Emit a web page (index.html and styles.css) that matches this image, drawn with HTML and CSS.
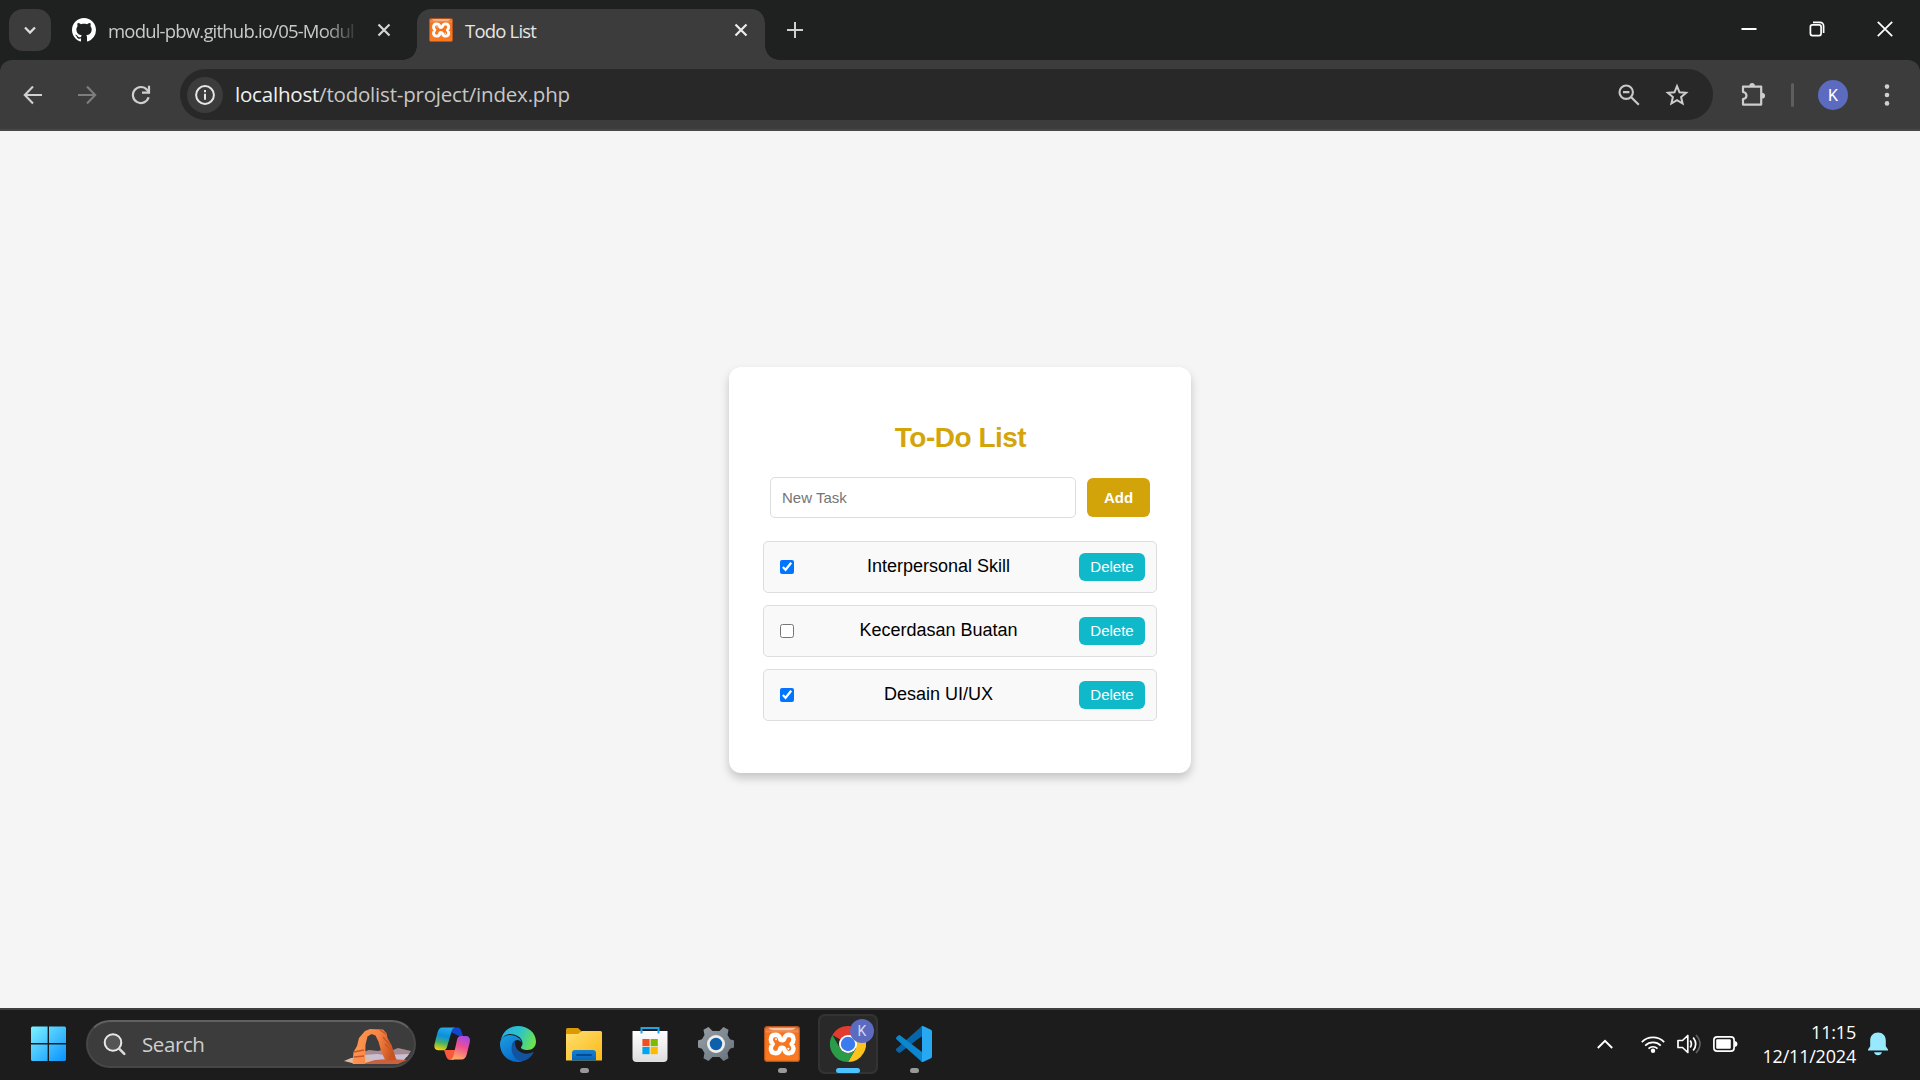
FILE: index.html
```html
<!DOCTYPE html>
<html lang="en">
<head>
<meta charset="utf-8">
<title>Todo List</title>
<link rel="stylesheet" href="styles.css">
</head>
<body>
<svg width="0" height="0" class="defs" aria-hidden="true">
  <defs>
    <linearGradient id="xamppBg" x1="0" y1="0" x2="0" y2="1"><stop offset="0" stop-color="#d9662a"/><stop offset=".14" stop-color="#f08a50"/><stop offset=".2" stop-color="#f4731c"/><stop offset="1" stop-color="#fb7a22"/></linearGradient>
    <symbol id="xampp" viewBox="0 0 36 36">
      <rect x=".6" y=".6" width="34.8" height="34.8" rx="2.5" fill="url(#xamppBg)" stroke="#b9541c" stroke-width="1.2"/>
      <path d="M4 1.800h28q-2 2.400-6 2.400H10Q6 4.200 4 1.800z" fill="#f7c3a0"/>
      <path d="M18 14.200Q16 14.200 16 12Q15 8.800 11.500 8.800Q6.800 9 6.800 13.500Q6.800 16 8.800 18Q6.800 20 6.800 22.500Q6.800 27 11.500 27.200Q15 27.200 16 24Q16 21.800 18 21.800Q20 21.800 20.500 24Q21.500 27.200 25 27.200Q29.500 27 29.500 22.500Q29.500 20 27.500 18Q29.500 16 29.500 13.500Q29.500 9 25 8.800Q21.500 8.800 20.500 12Q20 14.200 18 14.200z" fill="none" stroke="#fff" stroke-width="4.400" stroke-linejoin="round"/>
      <path d="M12 13.200h.1M24.300 22.800h.1" stroke="#fff" stroke-width="2" stroke-linecap="round"/>
    </symbol>
  </defs>
</svg>

<header class="tabstrip">
  <button class="tab-search"><svg width="14" height="14" viewBox="0 0 14 14"><path d="M2 4.500l5 5 5-5" fill="none" stroke="#dcdcdc" stroke-width="2.300"/></svg></button>
  <div class="tab">
    <svg class="favicon" width="24" height="24" viewBox="0 0 16 16"><path fill="#fff" d="M8 0C3.580 0 0 3.580 0 8c0 3.540 2.290 6.530 5.470 7.590.4.070.55-.17.55-.38 0-.19-.01-.82-.01-1.490-2.010.37-2.530-.49-2.690-.94-.09-.23-.48-.94-.82-1.130-.28-.15-.68-.52-.01-.53.63-.01 1.080.58 1.230.82.72 1.210 1.870.87 2.330.66.070-.52.28-.87.51-1.070-1.780-.2-3.640-.89-3.640-3.950 0-.87.31-1.590.82-2.150-.08-.2-.36-1.020.08-2.120 0 0 .67-.21 2.200.82.64-.18 1.320-.27 2-.27s1.360.09 2 .27c1.530-1.040 2.200-.82 2.200-.82.44 1.100.16 1.920.08 2.120.51.56.82 1.270.82 2.150 0 3.070-1.870 3.750-3.650 3.950.29.25.54.73.54 1.480 0 1.070-.01 1.930-.01 2.200 0 .21.15.46.55.38A8.010 8.010 0 0 0 16 8c0-4.420-3.580-8-8-8z"/></svg>
    <span class="tab-title fade">modul-pbw.github.io/05-Modul</span>
    <svg class="tab-close" width="14" height="14" viewBox="0 0 14 14"><path d="M1.500 1.500l11 11M12.500 1.500l-11 11" stroke="#d5d5d5" stroke-width="2.200"/></svg>
  </div>
  <div class="tab active">
    <svg class="favicon" width="24" height="24"><use href="#xampp"/></svg>
    <span class="tab-title">Todo List</span>
    <svg class="tab-close" width="14" height="14" viewBox="0 0 14 14"><path d="M1.500 1.500l11 11M12.500 1.500l-11 11" stroke="#ececec" stroke-width="2.200"/></svg>
  </div>
  <svg class="new-tab" width="16" height="16" viewBox="0 0 16 16"><path d="M8 0v16M0 8h16" stroke="#cfcfcf" stroke-width="2"/></svg>
  <div class="window-controls">
    <svg width="16" height="16" viewBox="0 0 16 16"><path d="M.5 8h15" stroke="#fff" stroke-width="2"/></svg>
    <svg width="16" height="16" viewBox="0 0 16 16"><rect x="1.400" y="3.900" width="10.700" height="10.700" rx="2" fill="none" stroke="#fff" stroke-width="1.700"/><path d="M4 1.400h7a3.600 3.600 0 0 1 3.600 3.600v7" fill="none" stroke="#fff" stroke-width="1.700"/></svg>
    <svg width="16" height="16" viewBox="0 0 16 16"><path d="M.8.8l14.400 14.400M15.200.8L.8 15.200" stroke="#fff" stroke-width="1.700"/></svg>
  </div>
</header>

<nav class="toolbar">
  <div class="nav-buttons">
    <svg width="20" height="20" viewBox="0 0 20 20"><path d="M19 10H2.500M10 1.600L1.800 10l8.200 8.400" fill="none" stroke="#d0d0d0" stroke-width="2.100"/></svg>
    <svg width="20" height="20" viewBox="0 0 20 20"><path d="M1 10h16.500M10 1.600l8.200 8.400-8.200 8.400" fill="none" stroke="#7d7d7d" stroke-width="2.100"/></svg>
    <svg width="20" height="20" viewBox="0 0 20 20"><path d="M17.600 12.300A8 8 0 1 1 16 4.800l1.800 2" fill="none" stroke="#cfcfcf" stroke-width="2.200"/><path d="M18 .7v7h-7" fill="none" stroke="#cfcfcf" stroke-width="2.200"/></svg>
  </div>
  <div class="omnibox">
    <span class="site-info"><svg width="20" height="20" viewBox="0 0 20 20"><circle cx="10" cy="10" r="8.900" fill="none" stroke="#e6e6e6" stroke-width="2"/><path d="M10 8.700v6M10 5v2.200" stroke="#e6e6e6" stroke-width="2"/></svg></span>
    <span class="url"><span class="host">localhost</span>/todolist-project/index.php</span>
    <svg class="zoom-icon" width="22" height="22" viewBox="0 0 22 22"><circle cx="8.200" cy="8.200" r="6.700" fill="none" stroke="#c8c8c8" stroke-width="2.100"/><path d="M13 13l7.800 7.800M5 8.200h6.400" stroke="#c8c8c8" stroke-width="2.200"/></svg>
    <svg class="star-icon" width="24" height="24" viewBox="0 0 24 24"><path d="M12 3.200l2.500 6.100 6.600.5-5 4.300 1.500 6.400-5.600-3.400-5.600 3.400 1.500-6.400-5-4.300 6.600-.5z" fill="none" stroke="#cdcdcd" stroke-width="2"/></svg>
  </div>
  <svg class="puzzle" width="26" height="26" viewBox="0 0 26 26"><path d="M3 4.600h18.200v18H3v-5.400c4.600-.8 4.600-6.400 0-7.200z" fill="none" stroke="#cdcdcd" stroke-width="2.200" stroke-linejoin="round"/><path d="M9.200 4.500a2.900 3.600 0 0 1 5.800 0zM21.500 10.800a3.600 2.900 0 0 1 0 5.800z" fill="#cdcdcd"/></svg>
  <span class="divider"></span>
  <span class="avatar">K</span>
  <svg class="kebab" width="6" height="22" viewBox="0 0 6 22"><g fill="#d0d0d0"><circle cx="3" cy="2.600" r="2.300"/><circle cx="3" cy="11" r="2.300"/><circle cx="3" cy="19.400" r="2.300"/></g></svg>
</nav>

<main class="page">
  <section class="card">
    <h1>To-Do List</h1>
    <form class="new-task">
      <input type="text" placeholder="New Task">
      <button type="button" class="add">Add</button>
    </form>
    <ul class="tasks">
      <li><input type="checkbox" checked><span>Interpersonal Skill</span><button class="delete">Delete</button></li>
      <li><input type="checkbox"><span>Kecerdasan Buatan</span><button class="delete">Delete</button></li>
      <li><input type="checkbox" checked><span>Desain UI/UX</span><button class="delete">Delete</button></li>
    </ul>
  </section>
</main>

<footer class="taskbar">
  <svg class="start" width="36" height="36" viewBox="0 0 36 36"><defs><linearGradient id="win" x1="0" y1="0" x2="1" y2="1"><stop offset="0" stop-color="#7df3ff"/><stop offset="1" stop-color="#0891ff"/></linearGradient></defs><path fill="url(#win)" d="M1.500.5H16.600v16.600H0V2Q0 .5 1.500.5zM18 .5h15.500q1.500 0 1.500 1.500v15.100H18zM0 18.400h16.600V35H1.500Q0 35 0 33.500zM18 18.400h17v15.100q0 1.500-1.500 1.500H18z"/></svg>
  <div class="search">
    <svg class="search-icon" width="24" height="24" viewBox="0 0 24 24"><circle cx="10" cy="10.500" r="8.300" fill="#555" stroke="#e8e8e8" stroke-width="2"/><path d="M16.300 16.800l5 5" stroke="#dadada" stroke-width="2.600" stroke-linecap="round"/></svg>
    <span>Search</span>
    <svg class="arch" width="68" height="40" viewBox="0 0 68 40"><defs><linearGradient id="rock" x1="0" y1="0" x2="1" y2=".2"><stop offset="0" stop-color="#ff9a55"/><stop offset=".6" stop-color="#fa8444"/><stop offset="1" stop-color="#c9531f"/></linearGradient></defs><path d="M20 28l6-2 9 1 7-2 8 1 5-2 13 3-4 6H20z" fill="#a78b92"/><path d="M20 31l14-1 8 1 24-1-5 6-10 3H20z" fill="#cbbdd2"/><path d="M1 37l7-3 8-1 10 1 4 5H9z" fill="#dbbba6"/><path d="M22 39l10-3 14-1 18 1-9 4H22z" fill="#c8613d"/><path d="M9.500 40l1-12 3.500-6 2-8 6-7 5-2 13 .5 3.500 3.500 1 5 4 7 5 15-11 .5-4-8-3-11-3-6-4-1.500-4 2.500-2 8-.5 19.500z" fill="url(#rock)"/><path d="M11 28l10-2M37 6l6 4M40 13l7 8M42 20l7 7M11 33l10-1" fill="none" stroke="#c3582a" stroke-width="1.300"/></svg>
  </div>
  <div class="apps">
    <div class="app"><svg width="36" height="36" viewBox="0 0 36 36"><defs><linearGradient id="cpA" x1=".4" y1="0" x2=".2" y2="1"><stop offset="0" stop-color="#25a9e8"/><stop offset=".35" stop-color="#0b8fe0"/><stop offset=".65" stop-color="#45b06a"/><stop offset="1" stop-color="#ffd500"/></linearGradient><linearGradient id="cpB" x1=".7" y1="0" x2=".4" y2="1"><stop offset="0" stop-color="#a349e8"/><stop offset=".45" stop-color="#ef4f93"/><stop offset="1" stop-color="#ffaa61"/></linearGradient></defs><path d="M19 1.500h4.500c2 0 3 1 3.500 2.800l2 5.700h-4l-8-4z" fill="#1545cf"/><path d="M10 24l2 6c1 2.500 2 4 4.500 4H20l2-10z" fill="#f8593c"/><path d="M8 1.500h13c-2 .5-3 2-3.800 5l-4.200 14.500c-.6 2-1.500 3.200-4 3.200H4C.5 24.200-.2 21 .7 17.500L3.500 6.500C4.500 3 6 1.500 8 1.500z" fill="url(#cpA)"/><path d="M27 10h5c3.500 0 4.500 3 3.700 6.500l-3 12c-1 3.500-2.500 5-5 5H16c2.300-.5 3-2 3.800-5L23 14c.7-2.500 1.500-4 4-4z" fill="url(#cpB)"/></svg></div>
    <div class="app"><svg width="36" height="36" viewBox="0 0 36 36"><defs><linearGradient id="edA" x1="0" y1=".2" x2="1" y2=".5"><stop offset="0" stop-color="#26afe8"/><stop offset=".5" stop-color="#2bc3c9"/><stop offset="1" stop-color="#6be34f"/></linearGradient><linearGradient id="edB" x1="0" y1="0" x2=".6" y2="1"><stop offset="0" stop-color="#1ba0e2"/><stop offset="1" stop-color="#0868ca"/></linearGradient></defs><path d="M1 14C3 5 10 0 18 0c10 0 18 7 18 15.500 0 5-3.500 8.500-8.500 8.500-4 0-6.500-1.200-6.500-2.500 0-1 1.500-1.700 1.500-4.300C22.500 11 15 8 10 8 6 8 3 10 1 14z" fill="url(#edA)"/><path d="M0 18c0-5 4-9 10-9 6.500 0 11 4 11.700 7.500C20.800 15 19 14 17.500 14c-4 0-5.500 4-5.500 7 0 8 6 13 12 13.500-2 1-4 1.500-6 1.500C8 36 0 28 0 18z" fill="url(#edB)"/><path d="M15 15c-2 1.500-3.500 4-3.500 7C11.500 29 17 36 23 35c4.500-1 8-4 10.500-8 .4-.8-.3-1-1-.7C25 30 14 26 15 15z" fill="#12529f"/></svg></div>
    <div class="app open"><svg width="36" height="36" viewBox="0 0 36 36"><defs><linearGradient id="fold" x1="0" y1="0" x2="1" y2="1"><stop offset="0" stop-color="#ffdf70"/><stop offset="1" stop-color="#fbb917"/></linearGradient><linearGradient id="foldB" x1="0" y1="0" x2="0" y2="1"><stop offset="0" stop-color="#1681d6"/><stop offset="1" stop-color="#0865b8"/></linearGradient></defs><path d="M1.500 2H12l3.500 3.200V12H0V3.500Q0 2 1.500 2z" fill="#d99b00"/><path d="M0 8h12l4-3h18.500Q36 5 36 6.500V34.500H0z" fill="url(#fold)"/><path d="M6 34.500V27q0-3 3-3h18q3 0 3 3v7.500z" fill="url(#foldB)"/><path d="M11 29h14" stroke="#054a8d" stroke-width="1.800" stroke-linecap="round"/></svg></div>
    <div class="app"><svg width="36" height="36" viewBox="0 0 36 36"><defs><linearGradient id="bag" x1="0" y1="0" x2="0" y2="1"><stop offset="0" stop-color="#fff"/><stop offset="1" stop-color="#dedede"/></linearGradient></defs><path d="M.5 5h35v27q0 4-4 4h-27q-4 0-4-4z" fill="url(#bag)"/><path d="M9.500 7.500V1.900h17v5.600" fill="none" stroke="#20a4e5" stroke-width="2"/><path fill="#f25022" d="M10.400 13h7.200v7.200h-7.200z"/><path fill="#7fba00" d="M18.600 13h7.200v7.200h-7.200z"/><path fill="#00a4ef" d="M10.400 21h7.200v7.200h-7.200z"/><path fill="#ffb900" d="M18.600 21h7.200v7.200h-7.200z"/></svg></div>
    <div class="app"><svg width="36" height="36" viewBox="0 0 36 36"><defs><linearGradient id="gear" x1="0" y1="0" x2="1" y2="1"><stop offset="0" stop-color="#98a0a6"/><stop offset="1" stop-color="#66727c"/></linearGradient></defs><path d="M10.500 1l4 4h7l4-4 5 2.800-1 5.200 2.500 4.300L36 14.500v7l-4 1.200-2.500 4.300 1 5.200-5 2.800-4-4h-7l-4 4-5-2.800 1-5.200L4 22.700 0 21.500v-7l4-1.200L6.500 9l-1-5.200z" fill="url(#gear)"/><circle cx="18" cy="18" r="7.600" fill="#0e60ad" stroke="#eee" stroke-width="2.800"/></svg></div>
    <div class="app open"><svg width="36" height="36"><use href="#xampp"/></svg></div>
    <div class="app current"><svg width="36" height="36" viewBox="0 0 36 36"><path d="M18 18L2.400 9A18 18 0 0 1 33.600 9H18z" fill="#e33b2e"/><path d="M18 9h15.600A18 18 0 0 1 18 36l7.800-13.500z" fill="#fcc31e"/><path d="M2.400 9l7.800 13.500A9 9 0 0 0 25.800 22.500L18 36A18 18 0 0 1 2.400 9z" fill="#2a9c48"/><circle cx="18" cy="18" r="9" fill="#fff"/><circle cx="18" cy="18" r="7.200" fill="#3a7cf0"/></svg><span class="badge">K</span></div>
    <div class="app open"><svg width="36" height="36" viewBox="0 0 36 36"><path d="M26 0v10L4.300 26.600q-1 .8-2 0L.6 25q-1.200-1.300 0-2.500z" fill="#0765a9"/><path d="M26 36V26L4.300 9.400q-1-.8-2 0L.6 11q-1.200 1.300 0 2.500z" fill="#0b86cf"/><path d="M26 .2q.6-.4 1.500 0L35 3.800q1 .5 1 1.700v25q0 1.200-1 1.700l-7.500 3.600q-1.500.5-2.500-.6 1 .5 1-1V1.800q0-1.200-1-.6z" fill="#27a9f2"/></svg></div>
  </div>
  <div class="tray">
    <svg class="chevron" width="16" height="10" viewBox="0 0 16 10"><path d="M.8 9L8 1.800 15.200 9" fill="none" stroke="#fff" stroke-width="1.900"/></svg>
    <svg class="wifi" width="24" height="18" viewBox="0 0 24 18"><g fill="none" stroke="#fff" stroke-width="1.700"><path d="M.8 7.200a15.600 15.600 0 0 1 22.400 0M4.200 10.600a11 11 0 0 1 15.600 0M7.500 13.600a6.400 6.400 0 0 1 9 0"/></g><circle cx="12" cy="15.700" r="2.200" fill="#fff"/></svg>
    <svg class="volume" width="25" height="20" viewBox="0 0 25 20"><path d="M1 6.500h4.500L10.800 1.500v17L5.500 13.500H1z" fill="none" stroke="#fff" stroke-width="1.700" stroke-linejoin="round"/><path d="M13.200 6.500q2.400 3.500 0 7M16.200 3.500q5 6.500 0 13" fill="none" stroke="#fff" stroke-width="1.700"/><path d="M19 1q8 9 0 18" fill="none" stroke="#666" stroke-width="1.500"/></svg>
    <svg class="battery" width="25" height="16" viewBox="0 0 25 16"><rect x=".9" y=".9" width="20.200" height="14.200" rx="3.200" fill="none" stroke="#fff" stroke-width="1.700"/><rect x="3.200" y="3.200" width="14.600" height="9.600" rx="1" fill="#fff"/><path d="M22 5q2.500.5 2.500 3T22 11z" fill="#fff"/></svg>
    <div class="clock"><span>11:15</span><span class="date">12/11/2024</span></div>
    <svg class="bell" width="20" height="24" viewBox="0 0 20 24"><path d="M10 .5c4.500 0 7.800 3.300 7.800 7.800v5.900L20 17.500v1H0v-1l2.200-3.300V8.300C2.200 3.800 5.500.5 10 .5zM6 20.300h8q-1 2.900-4 2.900t-4-2.900z" fill="#98e9fe"/></svg>
  </div>
</footer>
</body>
</html>
```
FILE: styles.css
```css
* { box-sizing: border-box; }
body {
  margin: 0;
  width: 1920px;
  height: 1080px;
  overflow: hidden;
  display: flex;
  flex-direction: column;
  background: #1f2120;
  font-family: "Open Sans", "Noto Sans", sans-serif;
}
svg { display: block; flex: none; }
button { border: 0; padding: 0; }
.defs { position: absolute; }

/* Tab strip */
.tabstrip {
  height: 60px;
  flex: none;
  display: flex;
  padding: 9px 27px 0 9px;
  color: #c9c9c9;
}
.tab-search {
  width: 42px;
  height: 42px;
  border-radius: 14px;
  background: #3c3c3c;
  display: grid;
  place-items: center;
}
.tab {
  width: 366px;
  height: 51px;
  display: flex;
  padding: 9px 26px 0 21px;
  font-size: 18.500px;
}
.tab-title {
  flex: 1;
  margin-left: 12px;
  height: 28px;
  line-height: 26px;
  white-space: nowrap;
  letter-spacing: -0.800px;
}
.fade {
  flex: none;
  width: 254px;
  -webkit-mask-image: linear-gradient(to right, #000 215px, transparent 252px);
  mask-image: linear-gradient(to right, #000 215px, transparent 252px);
}
.tab-close { margin: 5px 0 0 auto; }
.active {
  width: 348px;
  padding: 9px 17px 0 12px;
  background: #3c3c3c;
  border-radius: 14px 14px 0 0;
  color: #e6e6e6;
  position: relative;
}
.active::before, .active::after {
  content: "";
  position: absolute;
  bottom: 0;
  width: 14px;
  height: 14px;
}
.active::before { left: -14px; background: radial-gradient(circle at 0 0, transparent 13.500px, #3c3c3c 14px); }
.active::after { right: -14px; background: radial-gradient(circle at 100% 0, transparent 13.500px, #3c3c3c 14px); }
.new-tab { margin: 13px 0 0 22px; }
.window-controls {
  margin: 12px 0 0 auto;
  display: flex;
  gap: 52px;
}

/* Toolbar */
.toolbar {
  height: 71px;
  flex: none;
  display: flex;
  align-items: center;
  padding: 0 30px 0 23px;
  background: #3c3c3c;
  border-bottom: 2px solid #474747;
  border-radius: 12px 12px 0 0;
}
.nav-buttons { display: flex; gap: 34px; width: 157px; }
.omnibox {
  width: 1533px;
  height: 51px;
  border-radius: 26px;
  background: #282828;
  display: flex;
  align-items: center;
  padding: 0 24px 0 7px;
}
.site-info {
  width: 36px;
  height: 36px;
  border-radius: 50%;
  background: #3c3c3c;
  display: grid;
  place-items: center;
}
.url {
  margin: -2px 0 0 12px;
  font-size: 20.500px;
  letter-spacing: -0.200px;
  color: #c7c7c7;
}
.host { color: #f0f0f0; }
.zoom-icon { margin-left: auto; }
.star-icon { margin-left: 25px; }
.puzzle { margin-left: 27px; }
.divider { width: 3px; height: 24px; border-radius: 2px; background: #5e5e5e; margin-left: 25px; }
.avatar {
  width: 30px;
  height: 30px;
  margin-left: 24px;
  border-radius: 50%;
  background: #5c6bc0;
  color: #fff;
  font: 16px/31px Roboto, sans-serif;
  text-align: center;
}
.kebab { margin-left: auto; }

/* Page */
.page {
  flex: 1;
  background: #f5f5f5;
  font-family: "Liberation Sans", Arial, sans-serif;
  display: flex;
  justify-content: center;
  align-items: flex-start;
  padding-top: 236px;
}
.card {
  width: 462px;
  height: 406px;
  padding: 55px 34px 0;
  border-radius: 12px;
  background: #fff;
  box-shadow: 0 5px 10px rgba(0, 0, 0, 0.200);
}
h1 {
  margin: 0;
  font-size: 28px;
  line-height: 32px;
  letter-spacing: -0.500px;
  text-indent: 1px;
  text-align: center;
  color: #d4a50a;
}
.new-task { display: flex; align-items: center; justify-content: center; gap: 11px; margin-top: 23px; }
.new-task input {
  width: 306px;
  height: 41px;
  padding: 0 11px;
  border: 1px solid #ddd;
  border-radius: 5px;
  font: 15px "Liberation Sans", Arial, sans-serif;
}
.new-task input::placeholder { color: #757575; }
.add {
  width: 63px;
  height: 39px;
  border-radius: 6px;
  background: #d2a40a;
  color: #fff;
  font: bold 15px "Liberation Sans", Arial, sans-serif;
}
.tasks {
  list-style: none;
  margin: 23px 0 0;
  padding: 0;
  display: grid;
  gap: 12px;
}
.tasks li {
  height: 52px;
  display: flex;
  align-items: center;
  padding: 0 11px 0 16px;
  border: 1px solid #ddd;
  border-radius: 5px;
  background: #f9f9f9;
  font-size: 18px;
}
.tasks input { width: 14px; height: 14px; margin: 0; }
.tasks span { flex: 1; text-align: center; margin: -2px 2px 0 6px; }
.delete {
  width: 66px;
  height: 28px;
  padding-bottom: 1px;
  border-radius: 6px;
  background: #0fb9ca;
  color: #fff;
  font: 15px "Liberation Sans", Arial, sans-serif;
}

/* Taskbar */
.taskbar {
  height: 72px;
  flex: none;
  display: flex;
  align-items: center;
  padding: 0 32px 2px 31px;
  background: #1c1c1c;
  border-top: 2px solid #404040;
  color: #fff;
}
.start { margin-top: -1px; }
.search {
  width: 330px;
  height: 48px;
  margin: -1px 0 0 19px;
  padding: 0 3px 0 15px;
  display: flex;
  align-items: center;
  border: 2px solid #474747;
  border-top-color: #606060;
  border-radius: 24px;
  background: #3c3c3c;
  color: #cfcfcf;
  font-size: 20.500px;
  letter-spacing: -0.400px;
}
.search span { margin-left: 15px; }
.arch { margin-left: auto; }
.apps { display: flex; margin-left: 3px; }
.app {
  width: 60px;
  height: 60px;
  margin: -1px 3px 0;
  display: grid;
  place-items: center;
  border-radius: 7px;
  position: relative;
}
.open::after, .current::after {
  content: "";
  position: absolute;
  left: 26px;
  bottom: 1px;
  width: 9px;
  height: 5px;
  border-radius: 3px;
  background: #999;
}
.current { background: #292929; box-shadow: inset 0 0 0 2px #333; }
.current::after { left: 18px; width: 24px; background: #4cc2ff; }
.badge {
  position: absolute;
  left: 32px;
  top: 5px;
  width: 24px;
  height: 24px;
  border-radius: 50%;
  background: #5c6bc0;
  color: #d5d9ef;
  font: 14px/24px Roboto, sans-serif;
  text-align: center;
}
.tray { margin-left: auto; display: flex; align-items: center; }
.wifi { margin-left: 28px; }
.volume { margin-left: 12px; }
.battery { margin-left: 11px; }
.clock {
  width: 118px;
  display: flex;
  flex-direction: column;
  align-items: flex-end;
  font-size: 18px;
  line-height: 24px;
  letter-spacing: -0.200px;
  white-space: nowrap;
}
.bell { margin-left: 12px; }
```
